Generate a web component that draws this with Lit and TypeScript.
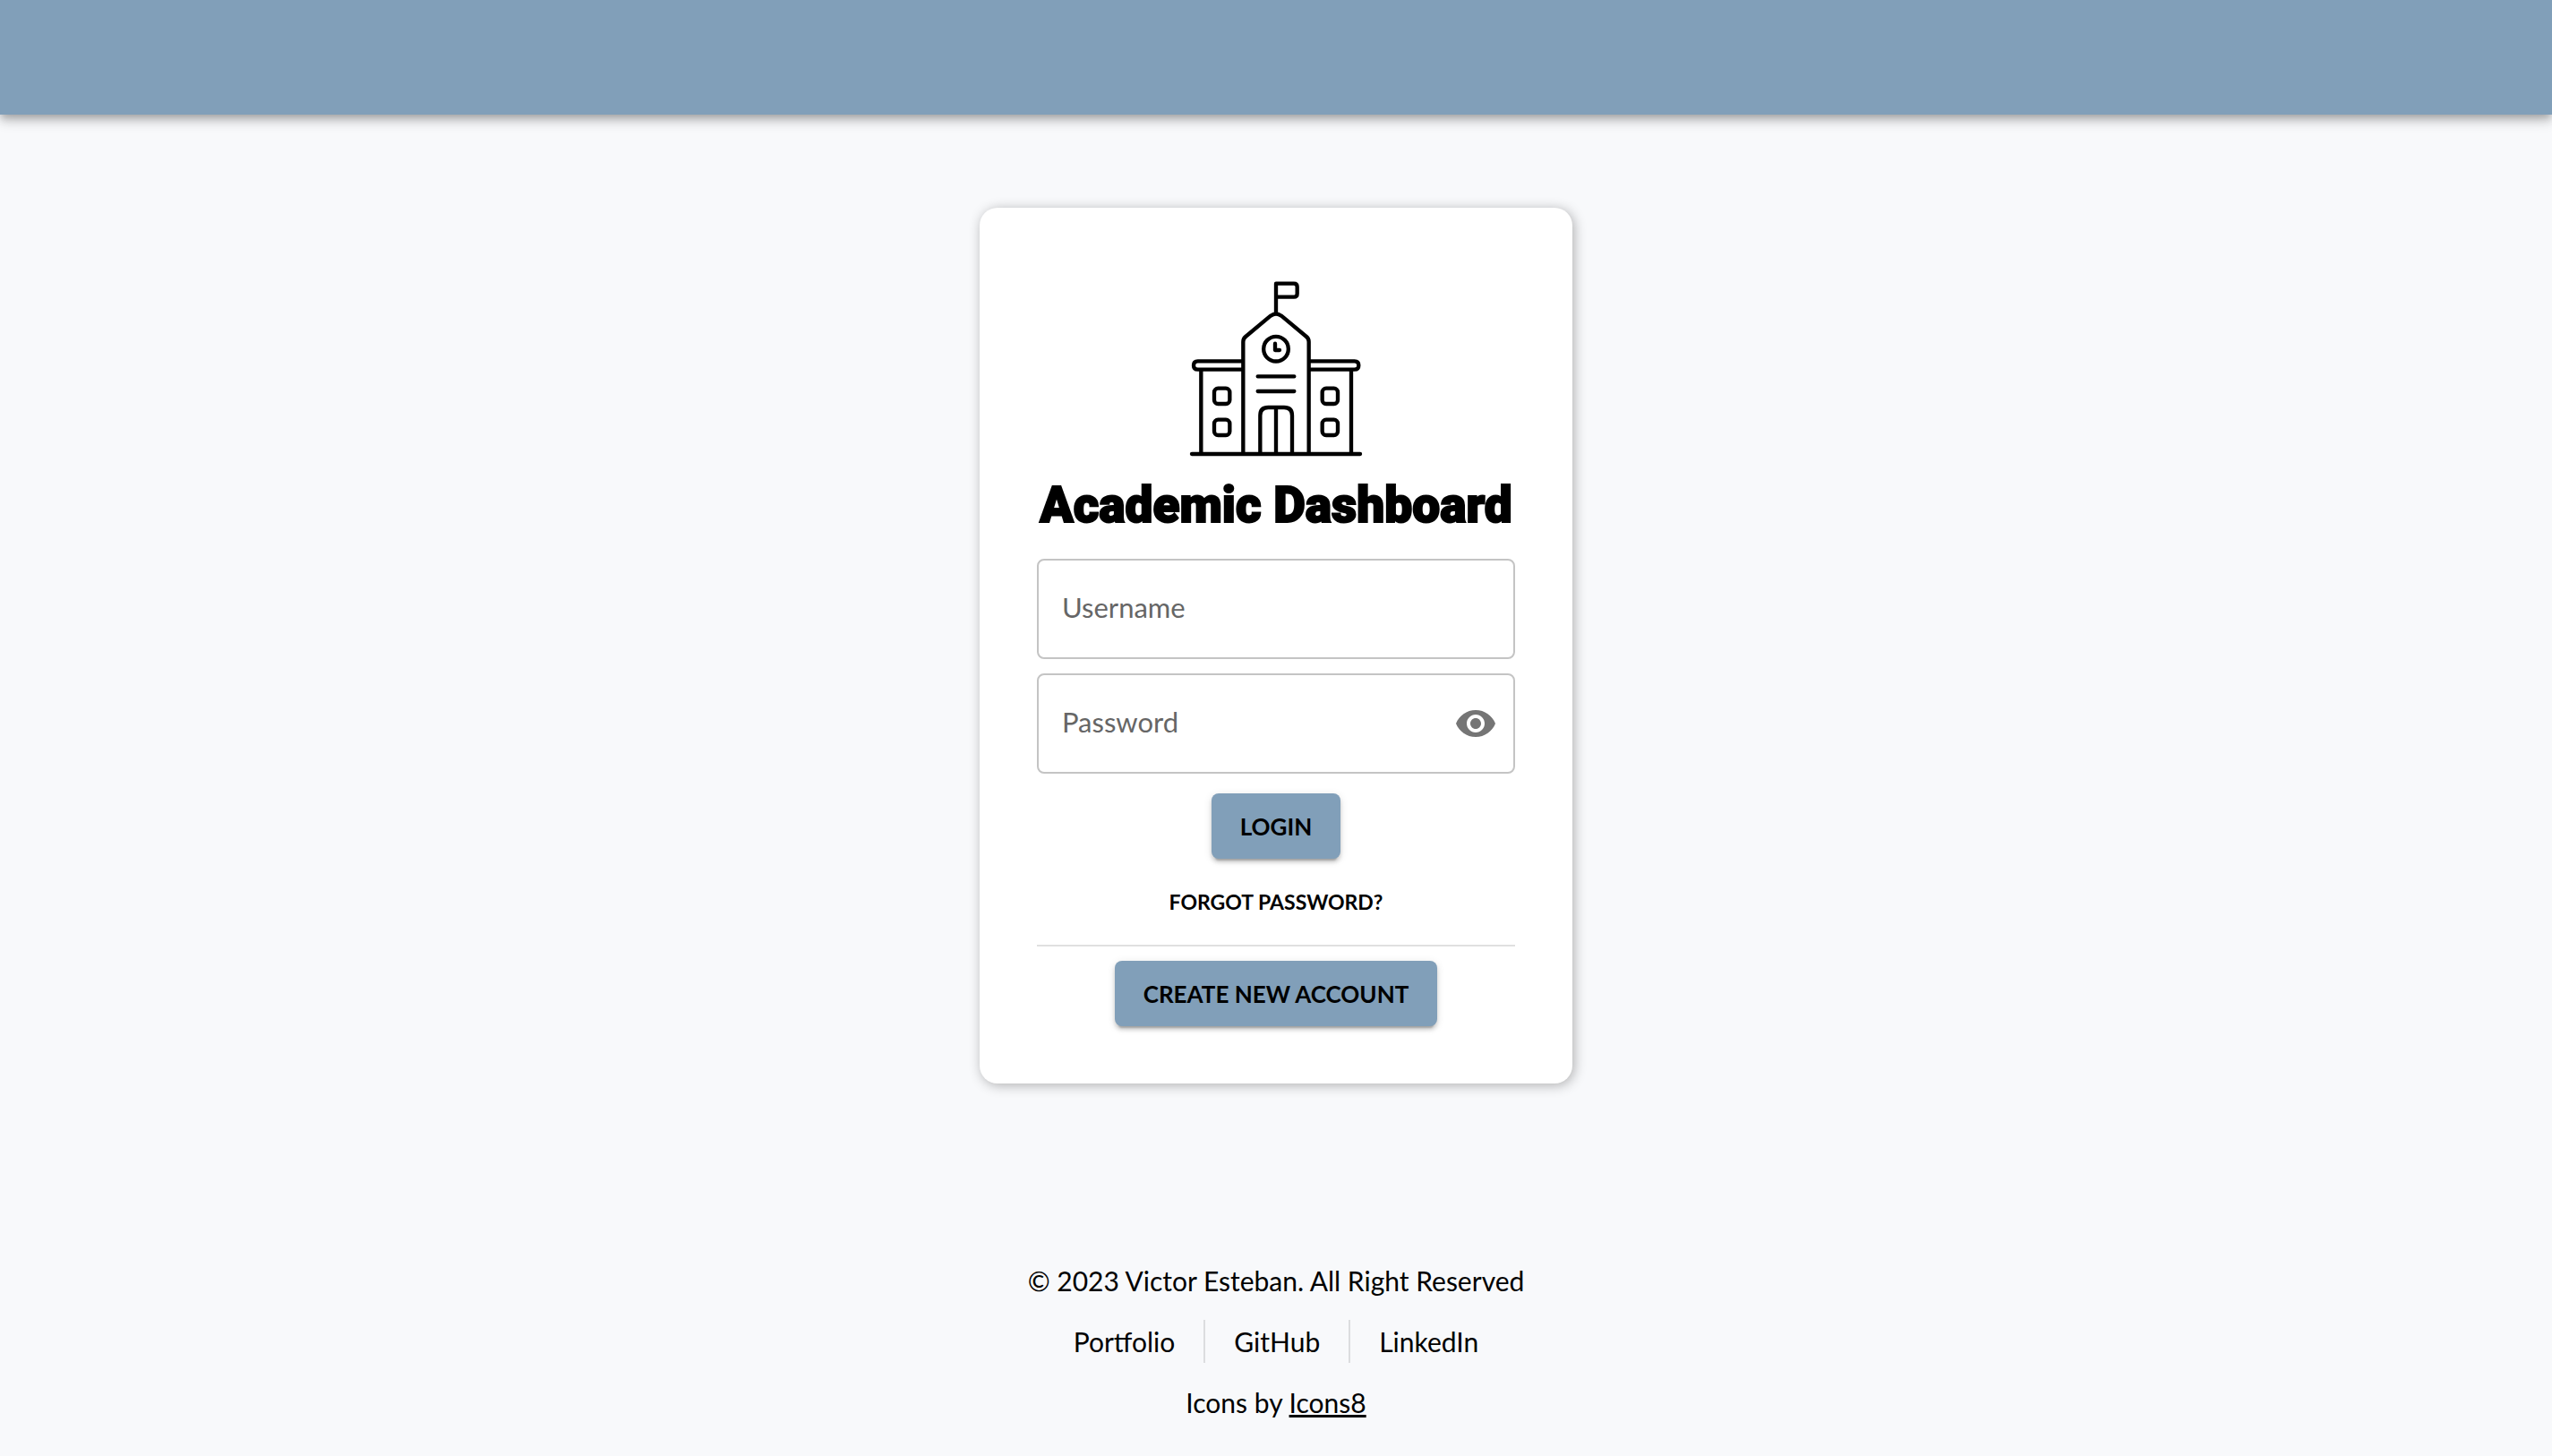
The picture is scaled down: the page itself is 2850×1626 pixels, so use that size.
import { LitElement, html, css, svg } from "lit";
import { customElement, state } from "lit/decorators.js";

const schoolIcon = svg`
  <g fill="none" stroke="#000" stroke-width="13" stroke-linecap="round" stroke-linejoin="round">
    <path d="M375 178V80h60q11 0 11 11v23q0 11-11 11h-60" />
    <path d="M265 646V275q0-10 8-17l84-70q18-13 36 0l84 70q8 7 8 17v371" />
    <circle cx="375" cy="299" r="41.500" />
    <path d="M372 281v22h15" />
    <path d="M314 391h122M314 441h122" />
    <path d="M322 646V522q0-27 27-27h53q27 0 27 27v124M375 497v149" />
    <path d="M260 340H113q-14 0-14 14t14 14h147M491 340h147q14 0 14 14t-14 14H491" />
    <path d="M124 370v276M627 370v276" />
    <rect x="168" y="431" width="52" height="52" rx="13" />
    <rect x="168" y="536" width="52" height="52" rx="13" />
    <rect x="530" y="431" width="52" height="52" rx="13" />
    <rect x="530" y="536" width="52" height="52" rx="13" />
    <path d="M93 651h564" />
  </g>
`;

@customElement("app-root")
export class AppRoot extends LitElement {
  @state() private passwordVisible = false;

  static styles = css`
    :host {
      display: flex;
      flex-direction: column;
      min-height: 100vh;
      box-sizing: border-box;
      background: #f8f9fb;
      color: #000;
      font-family: Lato, "Open Sans", sans-serif;
      font-size: 30px;
      line-height: 48px;
    }
    * {
      box-sizing: border-box;
    }
    .bar {
      height: 128px;
      background: #819fb9;
      box-shadow: 0 4px 8px -2px rgba(0, 0, 0, 0.2),
        0 8px 10px rgba(0, 0, 0, 0.14), 0 2px 20px rgba(0, 0, 0, 0.12);
    }
    .main {
      flex: 1;
      display: flex;
      justify-content: center;
      align-items: flex-start;
      padding: 104px 32px;
    }
    .card {
      display: flex;
      flex-direction: column;
      align-items: center;
      width: 662px;
      max-width: 100%;
      padding: 64px;
      background: #fff;
      border-radius: 20px;
      box-shadow: 2px 2px 14px rgba(0, 0, 0, 0.3);
    }
    .logo {
      width: 200px;
      height: 224px;
    }
    .title {
      margin: 0 0 16px;
      font-family: Roboto, sans-serif;
      font-weight: 900;
      font-size: 55px;
      line-height: 88px;
      white-space: nowrap;
      -webkit-text-stroke: 2px #000;
    }
    .field {
      position: relative;
      display: flex;
      align-items: center;
      width: 100%;
      height: 112px;
      margin-bottom: 16px;
      border: 2px solid #c4c4c4;
      border-radius: 8px;
    }
    .label {
      position: absolute;
      top: 28px;
      left: 26px;
      color: #666;
      font-size: 31px;
      pointer-events: none;
    }
    .input {
      flex: 1;
      min-width: 0;
      height: 100%;
      padding: 0 26px;
      border: 0;
      outline: 0;
      background: transparent;
      font: inherit;
    }
    .input:focus + .label,
    .input:not(:placeholder-shown) + .label {
      top: -20px;
      padding: 0 8px;
      background: #fff;
      font-size: 24px;
      line-height: 32px;
    }
    .eye {
      display: flex;
      padding: 16px;
      margin-right: 2px;
      border: 0;
      background: none;
      cursor: pointer;
    }
    .eye-icon {
      width: 48px;
      height: 48px;
      fill: #757575;
    }
    .button {
      height: 73px;
      padding: 0 32px;
      border: 0;
      border-radius: 8px;
      background: #819fb9;
      color: #000;
      font: inherit;
      font-size: 26px;
      font-weight: 700;
      cursor: pointer;
      box-shadow: 0 6px 2px -4px rgba(0, 0, 0, 0.2),
        0 4px 4px rgba(0, 0, 0, 0.14), 0 2px 10px rgba(0, 0, 0, 0.12);
    }
    .login {
      margin-top: 6px;
    }
    .forgot {
      margin: 24px 0;
      color: #000;
      font-size: 23px;
      font-weight: 700;
      text-decoration: none;
    }
    .divider {
      width: 100%;
      margin: 0 0 16px;
      border: 0;
      border-top: 2px solid #e0e0e0;
    }
    .footer {
      display: flex;
      flex-direction: column;
      align-items: center;
      gap: 20px;
      padding-bottom: 36px;
    }
    .text {
      margin: 0;
    }
    .links {
      display: flex;
    }
    .link {
      padding: 0 32px;
      color: #000;
      text-decoration: none;
    }
    .link + .link {
      border-left: 2px solid #dcdddf;
    }
    .credit {
      color: #000;
      text-decoration-thickness: 3px;
    }
  `;

  private togglePassword() {
    this.passwordVisible = !this.passwordVisible;
  }

  render() {
    return html`
      <header class="bar"></header>
      <main class="main">
        <form class="card" @submit=${(e: Event) => e.preventDefault()}>
          <svg class="logo" viewBox="75 18 600 672" aria-hidden="true">${schoolIcon}</svg>
          <h1 class="title">Academic Dashboard</h1>
          <div class="field">
            <input class="input" id="username" type="text" placeholder=" " autocomplete="username" />
            <label class="label" for="username">Username</label>
          </div>
          <div class="field">
            <input
              class="input"
              id="password"
              type=${this.passwordVisible ? "text" : "password"}
              placeholder=" "
              autocomplete="current-password"
            />
            <label class="label" for="password">Password</label>
            <button class="eye" type="button" aria-label="Toggle password visibility" @click=${this.togglePassword}>
              <svg class="eye-icon" viewBox="0 0 24 24" aria-hidden="true">
                <path
                  d="M12 4.500C7 4.500 2.730 7.610 1 12c1.730 4.390 6 7.500 11 7.500s9.270-3.110 11-7.500c-1.730-4.390-6-7.500-11-7.500zM12 17c-2.760 0-5-2.240-5-5s2.240-5 5-5 5 2.240 5 5-2.240 5-5 5zm0-8c-1.660 0-3 1.340-3 3s1.340 3 3 3 3-1.340 3-3-1.340-3-3-3z"
                />
              </svg>
            </button>
          </div>
          <button class="button login" type="submit">LOGIN</button>
          <a class="forgot" href="#forgot">FORGOT PASSWORD?</a>
          <hr class="divider" />
          <button class="button" type="button">CREATE NEW ACCOUNT</button>
        </form>
      </main>
      <footer class="footer">
        <p class="text">© 2023 Victor Esteban. All Right Reserved</p>
        <nav class="links">
          <a class="link" href="#portfolio">Portfolio</a>
          <a class="link" href="#github">GitHub</a>
          <a class="link" href="#linkedin">LinkedIn</a>
        </nav>
        <p class="text">Icons by <a class="credit" href="#icons8">Icons8</a></p>
      </footer>
    `;
  }
}
